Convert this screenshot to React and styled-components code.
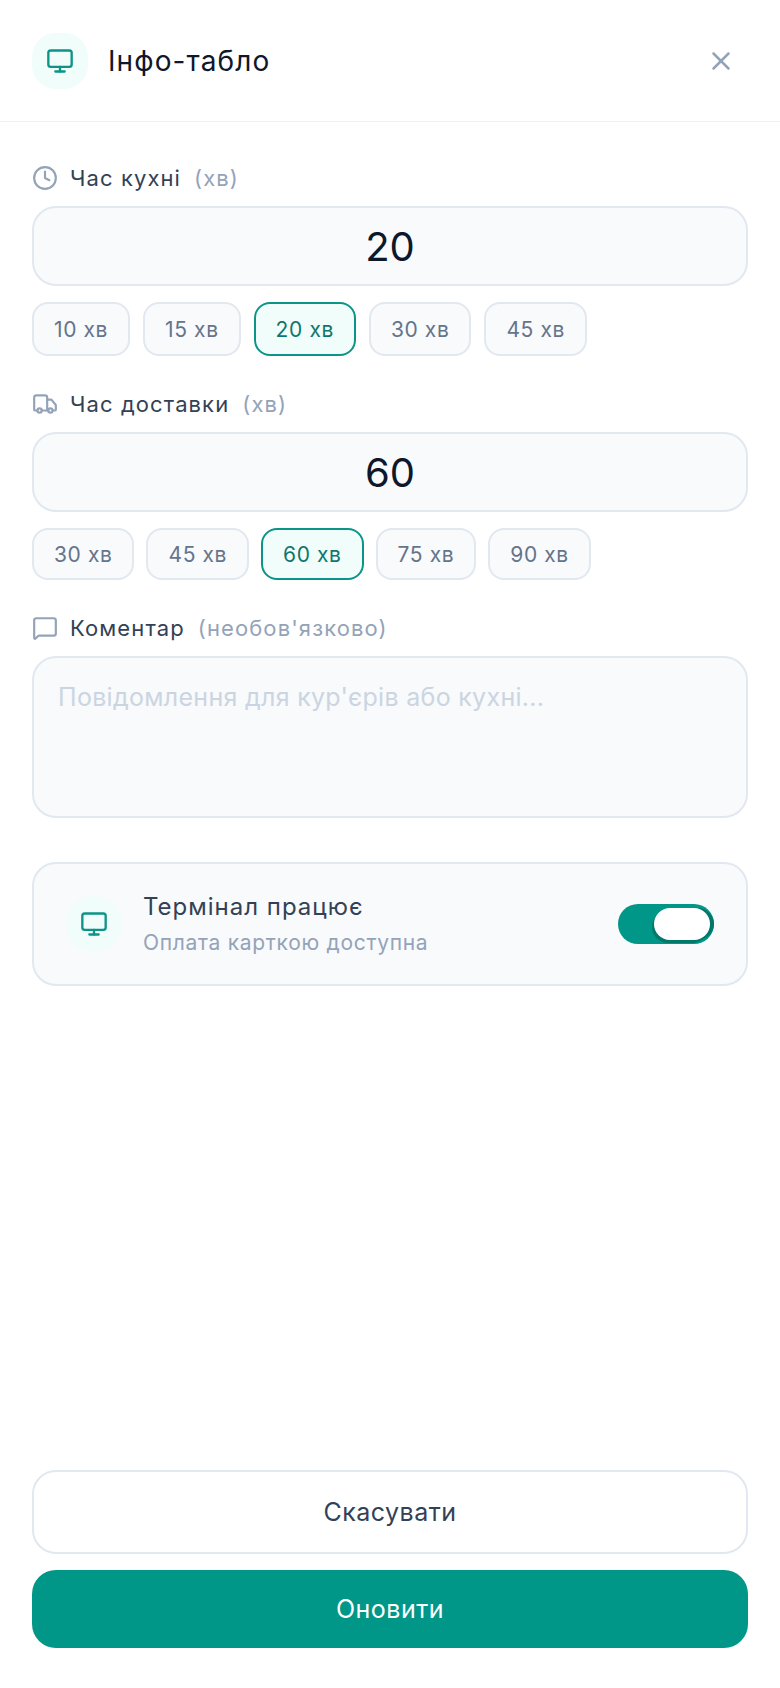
import React from "react"
import styled, { createGlobalStyle } from "styled-components"
import { Clock, MessageSquare, Monitor, Truck, X } from "lucide-react"

const GlobalStyle = createGlobalStyle`
  html, body {
    margin: 0;
    padding: 0;
    background: #ffffff;
  }
  * {
    box-sizing: border-box;
  }
  body {
    font-family: Inter, "Noto Sans", sans-serif;
  }
`

const Page = styled.div`
  width: 780px;
  height: 1688px;
  display: flex;
  flex-direction: column;
  background: #ffffff;
`

const Header = styled.header`
  height: 122px;
  flex: none;
  padding: 0 32px;
  display: flex;
  align-items: center;
  justify-content: space-between;
  border-bottom: 1px solid #e6f6f3;
`

const HeaderLeft = styled.div`
  display: flex;
  align-items: center;
  gap: 20px;
`

const IconBadge = styled.div`
  width: 56px;
  height: 56px;
  flex: none;
  display: flex;
  align-items: center;
  justify-content: center;
  border-radius: ${(p) => (p.$round ? "50%" : "24px")};
  background: #f0fdfa;
  color: #0d9488;
`

const Title = styled.h1`
  margin: 0;
  font-size: 28px;
  font-weight: 400;
  line-height: 36px;
  letter-spacing: 1.1px;
  color: #0f172a;
`

const CloseButton = styled.button`
  width: 30px;
  height: 30px;
  margin-right: 12px;
  padding: 0;
  border: 0;
  background: none;
  display: flex;
  align-items: center;
  justify-content: center;
  color: #94a3b8;
`

const Body = styled.main`
  flex: 1;
  padding: 36px 32px 0;
  display: flex;
  flex-direction: column;
`

const Field = styled.section`
  margin-bottom: 28px;
`

const Label = styled.div`
  height: 40px;
  display: flex;
  align-items: center;
  gap: 12px;
  margin-bottom: 8px;
  font-size: 22px;
  font-weight: 400;
  letter-spacing: 1.1px;
  color: #334155;
  svg {
    color: #94a3b8;
  }
`

const LabelHint = styled.span`
  margin-left: 1px;
  color: #94a3b8;
`

const NumberInput = styled.div`
  height: 80px;
  padding-top: 1px;
  display: flex;
  align-items: center;
  justify-content: center;
  border: 2px solid #e2e8f0;
  border-radius: 24px;
  background: #f8fafc;
  font-size: 40px;
  font-weight: 400;
  color: #0f172a;
`

const Chips = styled.div`
  display: flex;
  gap: ${(p) => p.$gap}px;
  margin-top: 16px;
`

const Chip = styled.button`
  height: ${(p) => p.$height}px;
  padding: 0 20px;
  border: 2px solid ${(p) => (p.$active ? "#0d9488" : "#e2e8f0")};
  border-radius: 16px;
  background: ${(p) => (p.$active ? "#f0fdfa" : "#f8fafc")};
  font-family: inherit;
  font-size: 21px;
  font-weight: 400;
  letter-spacing: 0.6px;
  color: ${(p) => (p.$active ? "#0f766e" : "#64748b")};
`

const CommentBox = styled.div`
  height: 162px;
  padding: 23px 24px;
  border: 2px solid #e2e8f0;
  border-radius: 24px;
  background: #f8fafc;
  font-size: 25px;
  line-height: 32px;
  letter-spacing: 0.3px;
  color: #cbd5e1;
`

const TerminalCard = styled.section`
  height: 124px;
  margin-top: 16px;
  padding: 0 32px;
  display: flex;
  align-items: center;
  border: 2px solid #e2e8f0;
  border-radius: 24px;
  background: #f8fafc;
`

const TerminalText = styled.div`
  flex: 1;
  margin-left: 21px;
`

const TerminalTitle = styled.div`
  font-size: 24px;
  font-weight: 400;
  line-height: 32px;
  letter-spacing: 1px;
  color: #334155;
`

const TerminalSub = styled.div`
  margin-top: 6px;
  font-size: 21px;
  line-height: 28px;
  letter-spacing: 0.7px;
  color: #94a3b8;
`

const Toggle = styled.div`
  width: 96px;
  height: 40px;
  padding: 4px;
  display: flex;
  justify-content: flex-end;
  border-radius: 20px;
  background: #009688;
`

const Thumb = styled.span`
  width: 56px;
  height: 32px;
  border-radius: 16px;
  background: #ffffff;
  box-shadow: -2px 3px 0 0 #00796b, 4px 0 0 0 #00796b;
`

const Footer = styled.footer`
  flex: none;
  padding: 0 32px 40px;
  display: flex;
  flex-direction: column;
  gap: 16px;
`

const ActionButton = styled.button`
  height: ${(p) => (p.$primary ? "78px" : "84px")};
  border: ${(p) => (p.$primary ? "0" : "2px solid #e2e8f0")};
  border-radius: 24px;
  background: ${(p) => (p.$primary ? "#009688" : "#ffffff")};
  font-family: inherit;
  font-size: 25px;
  font-weight: 400;
  letter-spacing: 0.5px;
  color: ${(p) => (p.$primary ? "#ffffff" : "#334155")};
`

const kitchen = [10, 15, 20, 30, 45]
const delivery = [30, 45, 60, 75, 90]

const TimeField = ({ icon, label, value, options, chipHeight, chipGap }) => (
  <Field>
    <Label>
      {icon}
      <span>{label}</span>
      <LabelHint>(хв)</LabelHint>
    </Label>
    <NumberInput>{value}</NumberInput>
    <Chips $gap={chipGap}>
      {options.map((n) => (
        <Chip key={n} $active={n === value} $height={chipHeight}>
          {n} хв
        </Chip>
      ))}
    </Chips>
  </Field>
)

export default function App() {
  return (
    <Page>
      <GlobalStyle />
      <Header>
        <HeaderLeft>
          <IconBadge>
            <Monitor size={28} strokeWidth={2} />
          </IconBadge>
          <Title>Інфо-табло</Title>
        </HeaderLeft>
        <CloseButton>
          <X size={30} strokeWidth={2} />
        </CloseButton>
      </Header>
      <Body>
        <TimeField icon={<Clock size={26} />} label="Час кухні" value={20} options={kitchen} chipHeight={54} chipGap={13} />
        <TimeField icon={<Truck size={26} />} label="Час доставки" value={60} options={delivery} chipHeight={52} chipGap={12} />
        <Field>
          <Label>
            <MessageSquare size={26} />
            <span>Коментар</span>
            <LabelHint>(необов'язково)</LabelHint>
          </Label>
          <CommentBox>Повідомлення для кур'єрів або кухні...</CommentBox>
        </Field>
        <TerminalCard>
          <IconBadge $round>
            <Monitor size={28} strokeWidth={2} />
          </IconBadge>
          <TerminalText>
            <TerminalTitle>Термінал працює</TerminalTitle>
            <TerminalSub>Оплата карткою доступна</TerminalSub>
          </TerminalText>
          <Toggle>
            <Thumb />
          </Toggle>
        </TerminalCard>
      </Body>
      <Footer>
        <ActionButton>Скасувати</ActionButton>
        <ActionButton $primary>Оновити</ActionButton>
      </Footer>
    </Page>
  )
}
